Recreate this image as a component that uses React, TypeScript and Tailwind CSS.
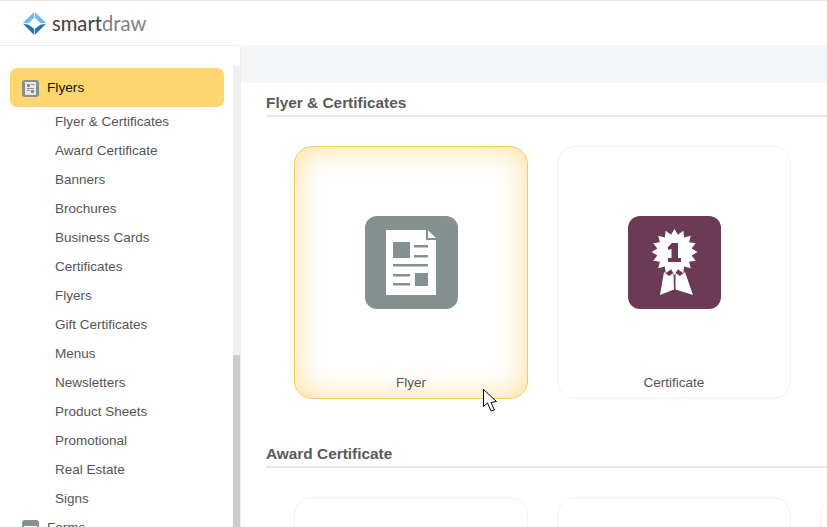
import React from 'react';

const items = [
  'Flyer & Certificates',
  'Award Certificate',
  'Banners',
  'Brochures',
  'Business Cards',
  'Certificates',
  'Flyers',
  'Gift Certificates',
  'Menus',
  'Newsletters',
  'Product Sheets',
  'Promotional',
  'Real Estate',
  'Signs',
];

function Logo() {
  return (
    <svg width="23" height="23" viewBox="0 0 24 24">
      <path d="M11.6 0 L0 11.2 L5.6 11.8 L11.6 6 Z" fill="#6db8f5" />
      <path d="M12.4 0 L24 11.2 L18.4 11.8 L12.4 6 Z" fill="#6db8f5" />
      <path d="M0 12.2 L5.8 13.2 L11.6 17.4 V24 Z" fill="#2473b5" />
      <path d="M24 12.2 L18.2 13.2 L12.4 17.4 V24 Z" fill="#2473b5" />
    </svg>
  );
}

function FlyerIcon() {
  return (
    <svg width="93" height="93" viewBox="0 0 93 93">
      <rect width="93" height="93" rx="12" fill="#859091" />
      <path d="M21 14 H61 V24 H71 V79 H21 Z" fill="#fff" />
      <path d="M63 14.5 L71 22 H63 Z" fill="#fff" />
      <rect x="28" y="26" width="17" height="16" fill="#859091" />
      <rect x="49" y="29" width="14" height="2.5" fill="#859091" />
      <rect x="49" y="39" width="14" height="2.5" fill="#859091" />
      <rect x="28" y="48" width="35" height="2.5" fill="#859091" />
      <rect x="28" y="58" width="17" height="2.5" fill="#859091" />
      <rect x="28" y="67" width="17" height="2.5" fill="#859091" />
      <rect x="50" y="57" width="13" height="13" fill="#859091" />
    </svg>
  );
}

// 16 pointed seal, outer and inner points alternating
const sealPoints = Array.from({ length: 32 }, (_, i) => {
  const r = i % 2 === 0 ? 23 : 17.5;
  const a = (i * Math.PI) / 16 - Math.PI / 2;
  return `${(46.5 + r * Math.cos(a)).toFixed(1)},${(36 + r * Math.sin(a)).toFixed(1)}`;
}).join(' ');

function CertIcon() {
  return (
    <svg width="93" height="93" viewBox="0 0 93 93">
      <rect width="93" height="93" rx="12" fill="#6b3a55" />
      <polygon points={sealPoints} fill="#fff" />
      <path d="M36 56 L41 60 L45.5 57 L46 73.5 L32 79 Z" fill="#fff" />
      <path d="M57 56 L52 60 L47.5 57 L47.5 73.5 L65 79 Z" fill="#fff" />
      <path d="M40 31 L44 27 H50 V42 H53 V46 H40 V42 H43.5 V33 L40 34 Z" fill="#6b3a55" />
    </svg>
  );
}

function Card({ label, icon, active }: { label?: string; icon?: React.ReactNode; active?: boolean }) {
  return (
    <div
      className={
        active
          ? 'w-[234px] h-[253px] shrink-0 rounded-[18px] border-[1.5px] border-[#fdc757] bg-white shadow-[inset_0_0_30px_rgba(253,205,100,0.7)] flex flex-col items-center'
          : 'w-[234px] h-[253px] shrink-0 rounded-[18px] border-[1.5px] border-[#f0f0f0] bg-white flex flex-col items-center'
      }
    >
      <div className="mt-[69px]">{icon}</div>
      <div className="mt-[66px] text-[13.5px] leading-[16px] text-[#555]">{label}</div>
    </div>
  );
}

function SectionTitle({ children }: { children: React.ReactNode }) {
  return (
    <div className="ml-[25px] border-b-2 border-[#e6e6e6] h-[34px] pt-[11px] text-[15.4px] leading-[17px] font-bold text-[#5a5a5a]">
      {children}
    </div>
  );
}

export default function App() {
  return (
    <div
      className="w-[827px] h-[527px] overflow-hidden relative bg-white flex flex-col"
      style={{ fontFamily: '"Liberation Sans", Arial, sans-serif' }}
    >
      {/* top bar */}
      <header className="h-[45px] shrink-0 border-t border-[#e8e8e8] flex items-center pl-[23px] gap-[6px]">
        <Logo />
        <span
          className="text-[20.2px] leading-[30px] text-[#3d4245] -mt-[1px]"
          style={{ fontFamily: 'Lato, sans-serif' }}
        >
          smart<span className="text-[#7c8285]">draw</span>
        </span>
      </header>

      <div className="flex flex-1 min-h-0">
        {/* sidebar */}
        <aside className="w-[241px] shrink-0 border-t border-r border-[#eeeeee] rounded-tr-[4px] flex">
          <div className="w-[233px] shrink-0 pl-[10px] pr-[9px] pt-[22px]">
            <div className="h-[39px] rounded-[7px] bg-[#fdd76e] flex items-center pl-[12px] gap-[8px]">
              <div className="w-[17px] h-[17px] rounded-[3px] bg-[#859091] flex items-center justify-center mt-[1px]">
                <div className="w-[11px] h-[13px] bg-[#e8e8e8] flex flex-wrap p-[2px] gap-[1px]">
                  <div className="w-[3px] h-[3px] bg-[#859091]" />
                  <div className="w-[3px] h-[1px] bg-[#859091]" />
                  <div className="w-[7px] h-[1px] bg-[#859091]" />
                  <div className="w-[3px] h-[1px] bg-[#859091]" />
                  <div className="w-[3px] h-[3px] bg-[#859091]" />
                </div>
              </div>
              <span className="text-[13.7px] text-[#111] pt-[1px]">Flyers</span>
            </div>
            <ul className="pl-[45px] pt-[1px]">
              {items.map((t) => (
                <li key={t} className="h-[29px] flex items-center text-[13.5px] text-[#555]">
                  {t}
                </li>
              ))}
            </ul>
            <div className="flex items-center pl-[12px] gap-[8px] h-[29px]">
              <div className="w-[17px] h-[17px] rounded-[3px] bg-[#859091] flex flex-col p-[2px] gap-[1px]">
                <div className="h-[3px] bg-[#859091]" />
                <div className="h-[8px] bg-white" />
              </div>
              <span className="text-[13.5px] text-[#555]">Forms</span>
            </div>
          </div>
          <div className="w-[7px] mt-[20px] bg-[#f0f0f0] flex flex-col justify-end">
            <div className="h-[172px] bg-[#cccccc]" />
          </div>
        </aside>

        {/* main */}
        <main className="flex-1 min-w-0 overflow-hidden">
          <div className="h-[38px] bg-[#f4f5f7]" />
          <SectionTitle>Flyer &amp; Certificates</SectionTitle>
          <div className="flex gap-[29px] ml-[53px] mt-[29px]">
            <Card active label="Flyer" icon={<FlyerIcon />} />
            <Card label="Certificate" icon={<CertIcon />} />
          </div>
          <div className="mt-[35px]">
            <SectionTitle>Award Certificate</SectionTitle>
          </div>
          <div className="flex gap-[29px] ml-[53px] mt-[29px]">
            <Card />
            <Card />
            <Card />
          </div>
        </main>
      </div>

      {/* mouse cursor */}
      <svg className="absolute left-[483px] top-[389px]" width="16" height="24" viewBox="0 0 16 24">
        <path
          d="M0.5 0.5 V17.5 L4.5 14 L8 22 L11.5 21 L8 13.5 L13.5 12.5 Z"
          fill="#fff"
          stroke="#000"
          strokeWidth="1"
          strokeLinejoin="round"
        />
      </svg>
    </div>
  );
}
